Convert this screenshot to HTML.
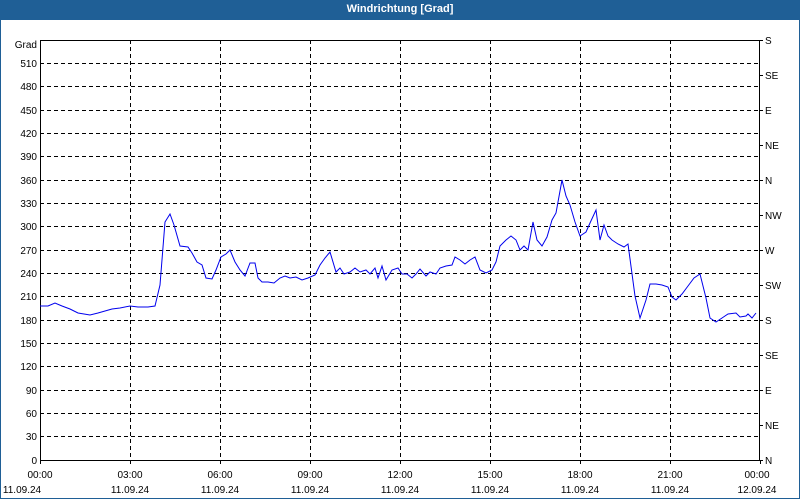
<!DOCTYPE html>
<html><head><meta charset="utf-8"><style>
html,body{margin:0;padding:0;background:#fff;}
body{width:800px;height:500px;overflow:hidden;position:relative;font-family:"Liberation Sans",sans-serif;}
.title{position:absolute;left:0;top:0;width:800px;height:20px;background:#1f5f96;color:#fff;font-size:11px;font-weight:bold;text-align:center;line-height:19px;}
.frame{position:absolute;left:0;top:20px;width:798px;height:478px;border:1px solid #1f5f96;border-top:none;}
</style></head><body>
<div class="title">Windrichtung [Grad]</div>
<div class="frame"></div>
<svg width="800" height="500" style="position:absolute;left:0;top:0" font-family="Liberation Sans, sans-serif" font-size="10" fill="#000">
<g stroke="#000" stroke-width="1" stroke-dasharray="4,3" shape-rendering="crispEdges">
<line x1="40" y1="63.5" x2="760" y2="63.5"/><line x1="40" y1="86.5" x2="760" y2="86.5"/><line x1="40" y1="110.5" x2="760" y2="110.5"/><line x1="40" y1="133.5" x2="760" y2="133.5"/><line x1="40" y1="156.5" x2="760" y2="156.5"/><line x1="40" y1="180.5" x2="760" y2="180.5"/><line x1="40" y1="203.5" x2="760" y2="203.5"/><line x1="40" y1="226.5" x2="760" y2="226.5"/><line x1="40" y1="250.5" x2="760" y2="250.5"/><line x1="40" y1="273.5" x2="760" y2="273.5"/><line x1="40" y1="296.5" x2="760" y2="296.5"/><line x1="40" y1="320.5" x2="760" y2="320.5"/><line x1="40" y1="343.5" x2="760" y2="343.5"/><line x1="40" y1="366.5" x2="760" y2="366.5"/><line x1="40" y1="390.5" x2="760" y2="390.5"/><line x1="40" y1="413.5" x2="760" y2="413.5"/><line x1="40" y1="436.5" x2="760" y2="436.5"/>
<line x1="130.5" y1="40" x2="130.5" y2="460"/><line x1="220.5" y1="40" x2="220.5" y2="460"/><line x1="310.5" y1="40" x2="310.5" y2="460"/><line x1="400.5" y1="40" x2="400.5" y2="460"/><line x1="490.5" y1="40" x2="490.5" y2="460"/><line x1="580.5" y1="40" x2="580.5" y2="460"/><line x1="670.5" y1="40" x2="670.5" y2="460"/>
</g>
<rect x="40.5" y="40.5" width="719" height="420" fill="none" stroke="#000" shape-rendering="crispEdges"/>
<g stroke="#000" shape-rendering="crispEdges">
<line x1="760" y1="40.5" x2="763" y2="40.5"/><line x1="760" y1="75.5" x2="763" y2="75.5"/><line x1="760" y1="110.5" x2="763" y2="110.5"/><line x1="760" y1="145.5" x2="763" y2="145.5"/><line x1="760" y1="180.5" x2="763" y2="180.5"/><line x1="760" y1="215.5" x2="763" y2="215.5"/><line x1="760" y1="250.5" x2="763" y2="250.5"/><line x1="760" y1="285.5" x2="763" y2="285.5"/><line x1="760" y1="320.5" x2="763" y2="320.5"/><line x1="760" y1="355.5" x2="763" y2="355.5"/><line x1="760" y1="390.5" x2="763" y2="390.5"/><line x1="760" y1="425.5" x2="763" y2="425.5"/><line x1="760" y1="460.5" x2="763" y2="460.5"/>
<line x1="40.5" y1="460" x2="40.5" y2="464"/><line x1="130.5" y1="460" x2="130.5" y2="464"/><line x1="220.5" y1="460" x2="220.5" y2="464"/><line x1="310.5" y1="460" x2="310.5" y2="464"/><line x1="400.5" y1="460" x2="400.5" y2="464"/><line x1="490.5" y1="460" x2="490.5" y2="464"/><line x1="580.5" y1="460" x2="580.5" y2="464"/><line x1="670.5" y1="460" x2="670.5" y2="464"/><line x1="760.5" y1="460" x2="760.5" y2="464"/>
</g>
<g text-anchor="end">
<text x="37" y="48">Grad</text>
<text x="37" y="67">510</text><text x="37" y="90">480</text><text x="37" y="114">450</text><text x="37" y="137">420</text><text x="37" y="160">390</text><text x="37" y="184">360</text><text x="37" y="207">330</text><text x="37" y="230">300</text><text x="37" y="254">270</text><text x="37" y="277">240</text><text x="37" y="300">210</text><text x="37" y="324">180</text><text x="37" y="347">150</text><text x="37" y="370">120</text><text x="37" y="394">90</text><text x="37" y="417">60</text><text x="37" y="440">30</text><text x="37" y="464">0</text>
</g>
<g>
<text x="765" y="44">S</text><text x="765" y="79">SE</text><text x="765" y="114">E</text><text x="765" y="149">NE</text><text x="765" y="184">N</text><text x="765" y="219">NW</text><text x="765" y="254">W</text><text x="765" y="289">SW</text><text x="765" y="324">S</text><text x="765" y="359">SE</text><text x="765" y="394">E</text><text x="765" y="429">NE</text><text x="765" y="464">N</text>
</g>
<g text-anchor="middle">
<text x="40" y="478">00:00</text><text x="130" y="478">03:00</text><text x="220" y="478">06:00</text><text x="310" y="478">09:00</text><text x="400" y="478">12:00</text><text x="490" y="478">15:00</text><text x="580" y="478">18:00</text><text x="670" y="478">21:00</text><text x="757" y="478">00:00</text>
<text x="22" y="493">11.09.24</text><text x="130" y="493">11.09.24</text><text x="220" y="493">11.09.24</text><text x="310" y="493">11.09.24</text><text x="400" y="493">11.09.24</text><text x="490" y="493">11.09.24</text><text x="580" y="493">11.09.24</text><text x="670" y="493">11.09.24</text><text x="757" y="493">12.09.24</text>
</g>
<polyline fill="none" stroke="#0000ee" stroke-width="1" points="40,306 48,306 55,303 62,306 70,309 78,313 90,315 98,313 105,311 112,309 120,308 130,306 138,307 148,307 155,306 160,285 165,222 170,214 174,225 180,246 188,247 192,253 197,262 202,265 206,278 212,279 216,270 221,257 226,254 230,250 235,262 240,270 245,276 250,263 255,263 258,278 262,282 268,282 274,283 280,278 285,276 290,278 296,277 302,280 308,278 315,275 320,265 325,258 330,252 336,272 340,268 344,274 350,272 355,268 360,272 366,270 370,274 375,268 378,278 382,266 386,280 392,270 398,268 402,274 407,274 412,278 416,274 420,269 426,276 430,272 436,274 440,268 446,266 452,265 455,257 460,260 465,264 470,260 475,257 480,270 486,273 492,270 496,262 500,246 506,240 511,236 516,240 520,250 524,246 528,250 533,222 537,240 542,246 547,237 552,220 556,213 562,180 566,196 570,205 575,222 580,236 586,232 590,223 596,210 600,240 604,225 608,236 612,240 618,244 624,247 628,244 635,296 640,318 646,300 650,284 656,284 662,285 668,287 672,297 676,300 682,294 688,286 694,278 700,274 706,298 710,318 716,322 722,318 728,314 736,313 740,317 746,316 748,314 752,318 756,313"/>
</svg>
</body></html>
